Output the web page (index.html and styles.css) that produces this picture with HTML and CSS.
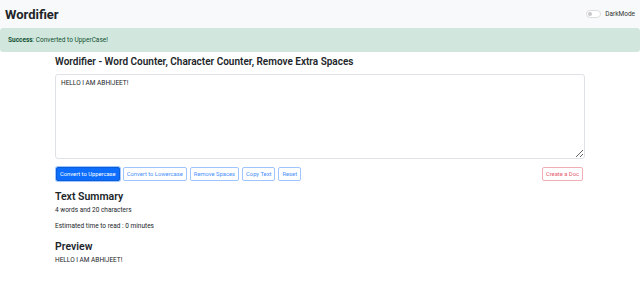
FILE: index.html
```html
<!DOCTYPE html>
<html lang="en">
<head>
  <meta charset="UTF-8" />
  <meta name="viewport" content="width=device-width, initial-scale=1.0" />
  <title>Wordifier</title>
  <link rel="stylesheet" href="styles.css">
</head>
<body>
  <nav class="navbar">
    <span class="brand">Wordifier</span>
    <label class="switch">
      <span class="switch-track"><span class="switch-dot"></span></span>
      <span>DarkMode</span>
    </label>
  </nav>

  <div class="alert">
    <strong>Success</strong>: Converted to UpperCase!
  </div>

  <div class="container">
    <h1 class="title">Wordifier - Word Counter, Character Counter, Remove Extra Spaces</h1>
    <textarea class="text-box" rows="8">HELLO I AM ABHIJEET!</textarea>

    <div class="actions">
      <button class="btn btn-primary">Convert to Uppercase</button>
      <button class="btn btn-outline">Convert to Lowercase</button>
      <button class="btn btn-outline">Remove Spaces</button>
      <button class="btn btn-outline">Copy Text</button>
      <button class="btn btn-outline">Reset</button>
      <button class="btn btn-danger">Create a Doc</button>
    </div>

    <h2 class="section-title">Text Summary</h2>
    <p class="summary">4 words and 20 characters</p>
    <p class="summary">Estimated time to read : 0 minutes</p>

    <h2 class="section-title">Preview</h2>
    <p class="summary">HELLO I AM ABHIJEET!</p>
  </div>
</body>
</html>
```

FILE: styles.css
```css
body {
  margin: 0;
  background-color: #fff;
  font-family: Roboto, 'Open Sans', sans-serif;
  color: #212529;
}

.navbar {
  height: 28px;
  display: flex;
  align-items: center;
  justify-content: space-between;
  padding: 0 5px;
  background-color: #f8f9fa;
}

.brand {
  font-size: 13px;
  font-weight: 700;
}

.switch {
  display: flex;
  align-items: center;
  gap: 4px;
  font-size: 6.5px;
  color: #333;
}

.switch-track {
  width: 12px;
  height: 6px;
  border: 1px solid #dcdcdc;
  border-radius: 4px;
  background-color: #fff;
  display: flex;
  align-items: center;
  padding-left: 1px;
}

.switch-dot {
  width: 4px;
  height: 4px;
  border-radius: 50%;
  background-color: #c8c8c8;
}

.alert {
  height: 24px;
  display: flex;
  align-items: center;
  padding: 0 8px;
  background-color: #d1e7dd;
  border-radius: 3px;
  color: #0f5132;
  font-size: 6.5px;
}

.container {
  width: 530px;
  margin: 0 auto;
}

.title {
  font-size: 10px;
  line-height: 12px;
  font-weight: 600;
  margin: 3.5px 0 6px;
}

.text-box {
  display: block;
  width: 100%;
  height: 85px;
  box-sizing: border-box;
  padding: 4px 5px;
  border: 1px solid #dee2e6;
  border-radius: 3px;
  font-family: inherit;
  font-size: 6.5px;
  color: #212529;
  resize: vertical;
}

.actions {
  display: flex;
  gap: 3px;
  margin-top: 8px;
  padding-left: 1px;
  padding-right: 2px;
}

.btn {
  height: 14px;
  padding: 0 3px;
  border-radius: 2px;
  font-family: inherit;
  font-size: 5.8px;
  background-color: #fff;
}

.btn-primary {
  background-color: #0d6efd;
  border: 1px solid #0b5ed7;
  color: #fff;
  box-shadow: 0 0 0 1px #9ec5fe;
}

.btn-outline {
  border: 1px solid #9ec5fe;
  color: #4a8ffd;
}

.btn-danger {
  margin-left: auto;
  border: 1px solid #f1aeb5;
  color: #e4606d;
}

.section-title {
  font-size: 10.5px;
  line-height: 13px;
  font-weight: 600;
  margin: 9px 0 3px;
}

.summary {
  font-size: 6.5px;
  line-height: 9px;
  margin: 0 0 7px;
}
```
